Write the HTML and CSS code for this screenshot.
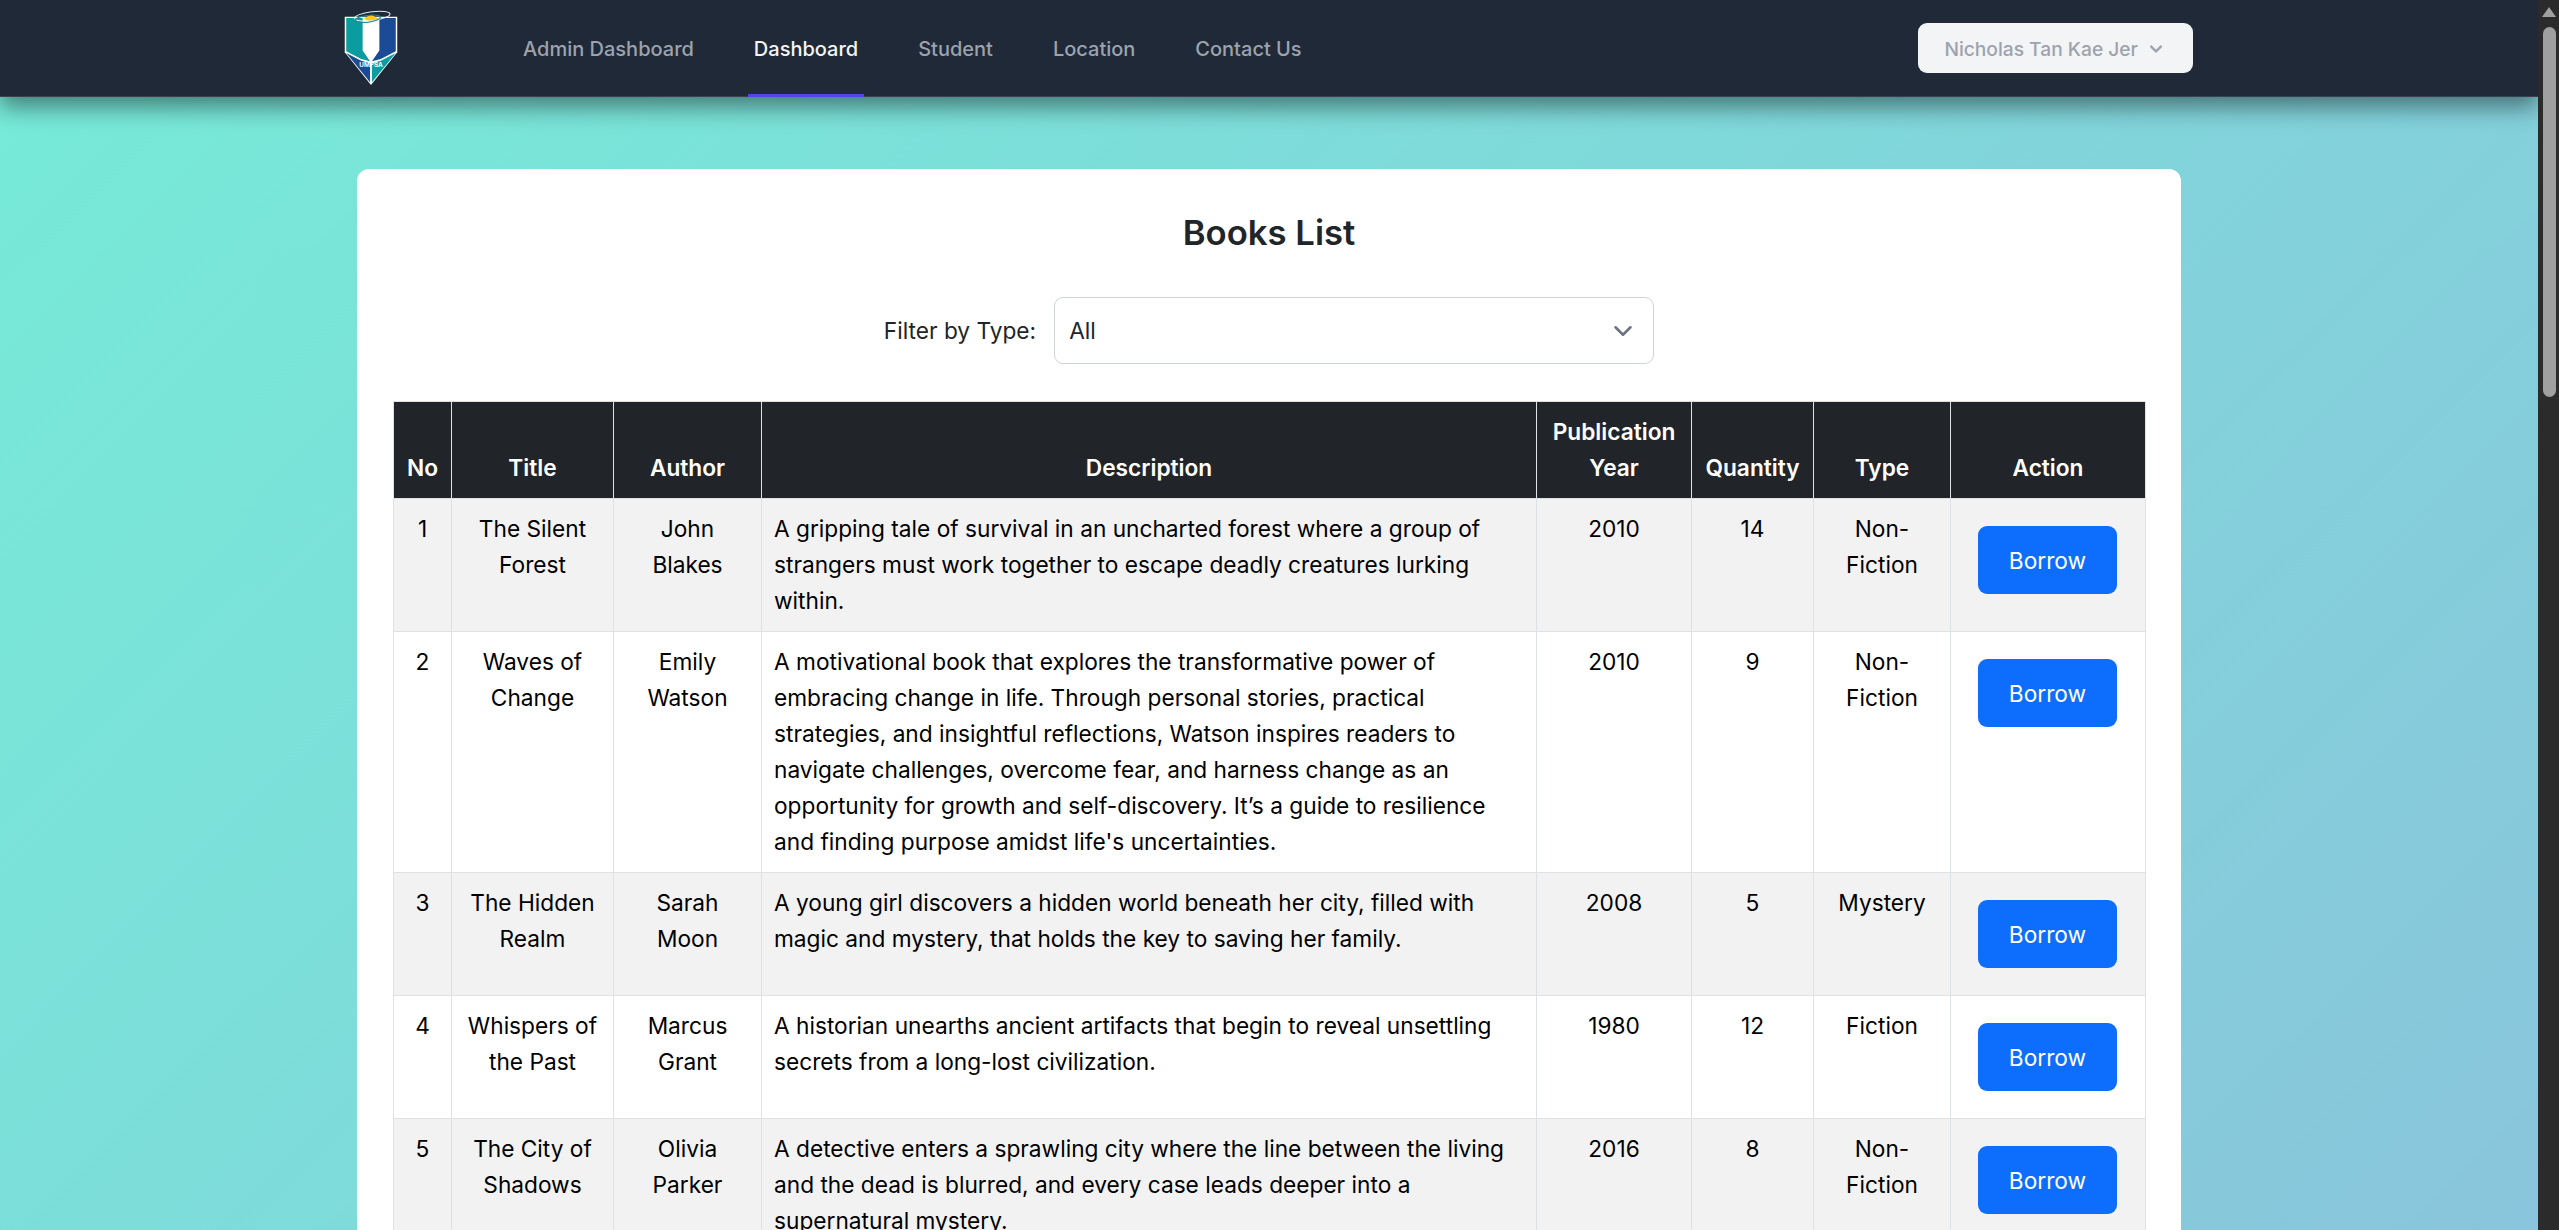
FILE: index.html
```html
<!DOCTYPE html>
<html>

<head>
    <title>Books List</title>
    <meta charset="UTF-8">
    <link rel="stylesheet" href="styles.css">
</head>

<body>
    <div class="window">
        <div class="page">
            <nav class="navbar">
                <a class="logo" href="#">
                    <svg width="54" height="76" viewBox="0 0 145 225" preserveAspectRatio="none">
                        <path d="M2 20H143V125L72.5 222L2 125Z" fill="#fff"/>
                        <path d="M6 24H50V120L70 152L46 145L6 122Z" fill="#0b9ca0"/>
                        <path d="M139 24H95V120L75 152L99 145L139 122Z" fill="#1b4b95"/>
                        <path d="M6 127L46 150L70 158V214Z" fill="#1b4b95"/>
                        <path d="M139 127L99 150L75 158V214Z" fill="#0b9ca0"/>
                        <path d="M72.5 14L93 25L72.5 36L52 25Z" fill="#f8c91c"/>
                        <ellipse cx="76" cy="18" rx="48" ry="13" transform="rotate(-8 76 18)" fill="none" stroke="#dfeff0" stroke-width="3"/>
                        <ellipse cx="64" cy="26" rx="34" ry="10" transform="rotate(-8 64 26)" fill="none" stroke="#1c8a96" stroke-width="3"/>
                        <text class="logo-text" x="72.5" y="168" text-anchor="middle">UMPSA</text>
                    </svg>
                </a>
                <div class="nav-links">
                    <a class="nav-link" href="#">Admin Dashboard</a>
                    <a class="nav-link active" href="#">Dashboard</a>
                    <a class="nav-link" href="#">Student</a>
                    <a class="nav-link" href="#">Location</a>
                    <a class="nav-link" href="#">Contact Us</a>
                </div>
                <button class="user-btn">
                    Nicholas Tan Kae Jer
                    <svg width="24" height="24" viewBox="0 0 20 20" fill="#9ca3af">
                        <path d="M5.3 7.3a1 1 0 0 1 1.4 0L10 10.6l3.3-3.3a1 1 0 1 1 1.4 1.4l-4 4a1 1 0 0 1-1.4 0l-4-4a1 1 0 0 1 0-1.4z"/>
                    </svg>
                </button>
            </nav>

            <main class="card">
                <h2 class="card-title">Books List</h2>
                <div class="filter">
                    <label class="filter-label" for="type">Filter by Type:</label>
                    <div class="select" id="type">
                        <span>All</span>
                        <svg width="20" height="20" viewBox="0 0 16 16" fill="none" stroke="#6b7280" stroke-width="2" stroke-linecap="round" stroke-linejoin="round">
                            <path d="M2 5l6 6 6-6"/>
                        </svg>
                    </div>
                </div>

                <table class="books">
                    <colgroup>
                        <col class="c-no"><col class="c-title"><col class="c-author"><col class="c-desc">
                        <col class="c-year"><col class="c-qty"><col class="c-type"><col class="c-action">
                    </colgroup>
                    <thead>
                        <tr>
                            <th>No</th>
                            <th>Title</th>
                            <th>Author</th>
                            <th>Description</th>
                            <th>Publication Year</th>
                            <th>Quantity</th>
                            <th>Type</th>
                            <th>Action</th>
                        </tr>
                    </thead>
                    <tbody>
                        <tr>
                            <td>1</td>
                            <td>The Silent Forest</td>
                            <td>John Blakes</td>
                            <td class="desc">A gripping tale of survival in an uncharted forest where a group of strangers must work together to escape deadly creatures lurking within.</td>
                            <td>2010</td>
                            <td>14</td>
                            <td>Non-Fiction</td>
                            <td><button class="borrow">Borrow</button></td>
                        </tr>
                        <tr>
                            <td>2</td>
                            <td>Waves of Change</td>
                            <td>Emily Watson</td>
                            <td class="desc">A motivational book that explores the transformative power of embracing change in life. Through personal stories, practical strategies, and insightful reflections, Watson inspires readers to navigate challenges, overcome fear, and harness change as an opportunity for growth and self-discovery. It’s a guide to resilience and finding purpose amidst life's uncertainties.</td>
                            <td>2010</td>
                            <td>9</td>
                            <td>Non-Fiction</td>
                            <td><button class="borrow">Borrow</button></td>
                        </tr>
                        <tr>
                            <td>3</td>
                            <td>The Hidden Realm</td>
                            <td>Sarah Moon</td>
                            <td class="desc">A young girl discovers a hidden world beneath her city, filled with magic and mystery, that holds the key to saving her family.</td>
                            <td>2008</td>
                            <td>5</td>
                            <td>Mystery</td>
                            <td><button class="borrow">Borrow</button></td>
                        </tr>
                        <tr>
                            <td>4</td>
                            <td>Whispers of the Past</td>
                            <td>Marcus Grant</td>
                            <td class="desc">A historian unearths ancient artifacts that begin to reveal unsettling secrets from a long-lost civilization.</td>
                            <td>1980</td>
                            <td>12</td>
                            <td>Fiction</td>
                            <td><button class="borrow">Borrow</button></td>
                        </tr>
                        <tr>
                            <td>5</td>
                            <td>The City of Shadows</td>
                            <td>Olivia Parker</td>
                            <td class="desc">A detective enters a sprawling city where the line between the living and the dead is blurred, and every case leads deeper into a supernatural mystery.</td>
                            <td>2016</td>
                            <td>8</td>
                            <td>Non-Fiction</td>
                            <td><button class="borrow">Borrow</button></td>
                        </tr>
                    </tbody>
                </table>
            </main>
        </div>

        <div class="scrollbar">
            <span class="arrow"></span>
            <div class="thumb"></div>
        </div>
    </div>
</body>

</html>
```

FILE: styles.css
```css
* {
    margin: 0;
    padding: 0;
    box-sizing: border-box;
}

html,
body {
    height: 100%;
    overflow: hidden;
}

body {
    font-family: Inter, "Noto Sans", sans-serif;
    font-size: 22.7px;
    line-height: 36px;
    color: #000;
}

.window {
    display: flex;
    height: 1230px;
}

.page {
    flex: 1;
    overflow: hidden;
    background: linear-gradient(135deg, #76ebd8, #89c5dc);
}

/* top bar */
.navbar {
    position: relative;
    z-index: 2;
    display: flex;
    align-items: center;
    height: 97px;
    padding-left: 344px;
    background: #1f2937;
    border-bottom: 1px solid #374151;
    box-shadow: 0 10px 22px rgba(0,0,0,0.45);
}

.logo {
    display: block;
    height: 76px;
}

.logo-text {
    font-size: 17px;
    font-weight: 700;
    fill: #fff;
}

.nav-links {
    display: flex;
    align-self: stretch;
    gap: 60px;
    margin-left: 125px;
}

.nav-link {
    display: flex;
    align-items: center;
    margin: 0 -6px -1px;
    padding: 4px 6px 0;
    font-size: 20px;
    font-weight: 500;
    color: #9ca3af;
    text-decoration: none;
    border-bottom: 3px solid transparent;
}

.nav-link.active {
    color: #f3f4f6;
    border-bottom-color: #4f46e5;
}

.user-btn {
    display: flex;
    align-items: center;
    gap: 6px;
    height: 50px;
    margin-left: auto;
    margin-right: 345px;
    padding: 2px 25px 0 26px;
    font-family: inherit;
    font-size: 19.2px;
    font-weight: 500;
    color: #9ca3af;
    background: #f3f4f6;
    border: none;
    border-radius: 9px;
}

/* card */
.card {
    width: 1824px;
    margin: 72px 0 0 357px;
    padding: 36px;
    background: #fff;
    border-radius: 12px;
}

.card-title {
    font-size: 34.7px;
    font-weight: 600;
    line-height: 54px;
    text-align: center;
    color: #212529;
}

.filter {
    display: flex;
    align-items: center;
    justify-content: center;
    gap: 18px;
    margin-top: 38px;
    color: #212529;
}

.select {
    display: flex;
    align-items: center;
    justify-content: space-between;
    width: 600px;
    height: 67px;
    padding: 0 20px 0 14px;
    border: 1.5px solid #ced4da;
    border-radius: 9px;
}

/* table */
.books {
    width: 1752px;
    margin-top: 37px;
    border-collapse: collapse;
    table-layout: fixed;
}

.c-no { width: 58px; }
.c-title { width: 162px; }
.c-author { width: 148px; }
.c-desc { width: 775px; }
.c-year { width: 155px; }
.c-qty { width: 122px; }
.c-type { width: 137px; }
.c-action { width: 195px; }

.books th,
.books td {
    padding: 12px;
    border: 1px solid #dee2e6;
    text-align: center;
    vertical-align: top;
}

.books th {
    font-weight: 600;
    color: #fff;
    background: #212529;
    vertical-align: bottom;
}

.books tbody tr:nth-child(odd) td {
    background: #f2f2f2;
}

.books td.desc {
    text-align: left;
}

.borrow {
    display: block;
    width: 139px;
    height: 68px;
    margin: 15px 0 15px 15px;
    font-family: inherit;
    font-size: 22.7px;
    color: #fff;
    background: #0d6efd;
    border: none;
    border-radius: 9px;
}

/* browser scrollbar */
.scrollbar {
    display: flex;
    flex-direction: column;
    align-items: center;
    width: 21px;
    padding-left: 1px;
    background: #2b2b2b;
}

.arrow {
    width: 0;
    height: 0;
    margin-top: 7px;
    border-left: 7.5px solid transparent;
    border-right: 7.5px solid transparent;
    border-bottom: 10px solid #a0a0a0;
}

.thumb {
    width: 13px;
    height: 370px;
    margin-top: 10px;
    background: #a0a0a0;
    border-radius: 7px;
}
```
